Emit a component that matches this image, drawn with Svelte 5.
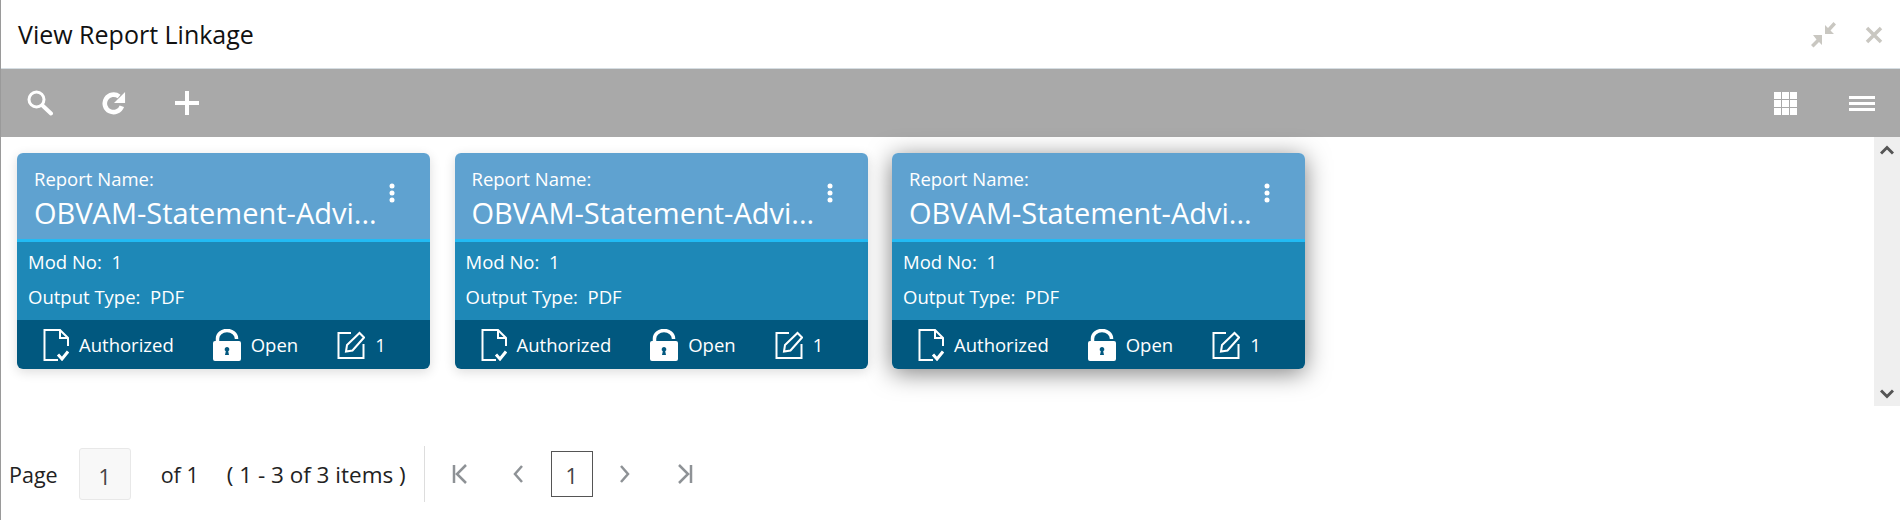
<script>
  const cards = [
    { id: 1, hover: false },
    { id: 2, hover: false },
    { id: 3, hover: true }
  ];
</script>

<div class="win">
  <header class="title">
    <h1>View Report Linkage</h1>
    <div class="winbtns">
      <svg width="27" height="27" viewBox="0 0 27 27" fill="#c9c7c1">
        <path d="M15 13V4L18 7 23.500 1 26 3.500 20.500 9.500 24 13Z"/>
        <path d="M12 14V24L9 21 3.500 26.500 1 24 6.500 18.500 3 14Z"/>
      </svg>
      <svg width="18" height="18" viewBox="0 0 18 18" stroke="#c9c7c1" stroke-width="3.500" fill="none">
        <path d="M2 2 16 16M16 2 2 16"/>
      </svg>
    </div>
  </header>

  <div class="toolbar">
    <div class="tools">
      <svg width="26" height="26" viewBox="0 0 26 26" fill="none" stroke="#fff">
        <circle cx="9.500" cy="9.500" r="7.500" stroke-width="3"/>
        <path d="M15.500 15.500 24 23.500" stroke-width="4" stroke-linecap="round"/>
      </svg>
      <svg width="24" height="24" viewBox="0 0 26 26" fill="none">
        <path d="M21.500 16.500A9.500 9.500 0 1 1 18.500 6" stroke="#fff" stroke-width="5"/>
        <path d="M25 1V13H13Z" fill="#fff"/>
      </svg>
      <svg width="24" height="24" viewBox="0 0 24 24" fill="#fff">
        <path d="M10 0h4v10h10v4H14v10h-4V14H0v-4h10z"/>
      </svg>
    </div>
    <div class="views">
      <svg width="23" height="23" viewBox="0 0 23 23" fill="#fff">
        {#each [0, 8, 16] as y}
          {#each [0, 8, 16] as x}
            <rect x={x} y={y} width="7" height="7"/>
          {/each}
        {/each}
      </svg>
      <svg width="26" height="15" viewBox="0 0 26 15" fill="#fff">
        <rect y="0" width="26" height="3"/>
        <rect y="6" width="26" height="3"/>
        <rect y="12" width="26" height="3"/>
      </svg>
    </div>
  </div>

  <div class="body">
    <div class="grid">
      {#each cards as c (c.id)}
        <article class="card" class:hover={c.hover}>
          <div class="head">
            <div class="names">
              <div class="lbl">Report Name:</div>
              <div class="val">OBVAM-Statement-Advi...</div>
            </div>
            <svg class="kebab" width="6" height="20" viewBox="0 0 6 20" fill="#fff">
              <circle cx="3" cy="3" r="2.500"/>
              <circle cx="3" cy="10" r="2.500"/>
              <circle cx="3" cy="17" r="2.500"/>
            </svg>
          </div>
          <div class="mid">
            <div>Mod No:&nbsp; 1</div>
            <div>Output Type:&nbsp; PDF</div>
          </div>
          <div class="foot">
            <span class="st first">
              <svg width="26" height="32" viewBox="0 0 26 32" fill="none" stroke="#fff" stroke-width="2">
                <path d="M15 31H1.500V1H17L25 9V17M17 1V9H25"/>
                <path d="M15 25.500 19 30 25 22.500" stroke-width="3"/>
              </svg>
              Authorized
            </span>
            <span class="st second">
              <svg width="28" height="32" viewBox="0 0 28 32" fill="#fff">
                <path d="M4.500 13V9.500A9.500 8 0 0 1 23.500 9.500V10" fill="none" stroke="#fff" stroke-width="3.500"/>
                <path fill-rule="evenodd" d="M2 12H26a2 2 0 0 1 2 2V30a2 2 0 0 1-2 2H2a2 2 0 0 1-2-2V14a2 2 0 0 1 2-2ZM14 18a2.300 2.300 0 0 0-1.200 4.300L12 26h4l-.8-3.700A2.300 2.300 0 0 0 14 18Z"/>
              </svg>
              Open
            </span>
            <span class="st third">
              <svg width="28" height="28" viewBox="0 0 28 28" fill="none" stroke="#fff" stroke-width="2">
                <path d="M14 2H1.500V27H26.500V13"/>
                <path d="M9 20.500 10 14 22.500 2 27 6.500 15.500 19.500Z"/>
              </svg>
              1
            </span>
          </div>
        </article>
      {/each}
    </div>
    <div class="scroll">
      <span class="sbtn">
        <svg width="14" height="10" viewBox="0 0 14 10" fill="none" stroke="#555" stroke-width="3"><path d="M1 8.500 7 2.500 13 8.500"/></svg>
      </span>
      <span class="sbtn">
        <svg width="14" height="10" viewBox="0 0 14 10" fill="none" stroke="#555" stroke-width="3"><path d="M1 1.500 7 7.500 13 1.500"/></svg>
      </span>
    </div>
  </div>

  <footer class="pager">
    <span>Page</span>
    <span class="pagebox">1</span>
    <span class="of">of 1</span>
    <span class="items">( 1 - 3 of 3 items )</span>
    <span class="sep"></span>
    <svg class="nav n1" width="15" height="20" viewBox="0 0 15 20" fill="none" stroke="#8e9296" stroke-width="2.500"><path d="M2 1V19M14 1 5 10 14 19"/></svg>
    <svg class="nav n2" width="12" height="20" viewBox="0 0 12 20" fill="none" stroke="#8e9296" stroke-width="2.500"><path d="M10 2 3 10 10 18"/></svg>
    <span class="cur">1</span>
    <svg class="nav n3" width="12" height="20" viewBox="0 0 12 20" fill="none" stroke="#8e9296" stroke-width="2.500"><path d="M2 2 9 10 2 18"/></svg>
    <svg class="nav n4" width="15" height="20" viewBox="0 0 15 20" fill="none" stroke="#8e9296" stroke-width="2.500"><path d="M13 1V19M1 1 10 10 1 19"/></svg>
  </footer>
</div>

<style>
  :global(body) { margin: 0; background: #fff; font-family: "Open Sans", "Noto Sans", sans-serif; }
  .win { height: 520px; border-left: 1px solid #9a9a9a; box-sizing: border-box; display: flex; flex-direction: column; overflow: hidden; }

  .title { height: 68px; flex: none; display: flex; align-items: center; justify-content: space-between; border-bottom: 1px solid #d5dde2; padding: 0 17px 0 17px; }
  h1 { margin: 0; font-size: 25px; font-weight: 400; color: #111; }
  .winbtns { display: flex; align-items: center; gap: 28px; margin-top: 1px; }

  .toolbar { height: 68px; flex: none; background: #a9a9a9; display: flex; align-items: center; justify-content: space-between; padding: 0 25px 0 26px; box-sizing: border-box; }
  .tools { display: flex; align-items: center; gap: 49px; }
  .views { display: flex; align-items: center; gap: 52px; }

  .body { height: 269px; flex: none; display: flex; justify-content: space-between; }
  .grid { display: flex; gap: 24.500px; padding: 16px; align-items: flex-start; }
  .card { width: 413px; height: 216px; border-radius: 6px; overflow: hidden; color: #fff; display: flex; flex-direction: column; box-shadow: 0 3px 12px rgba(0,0,0,.14); }
  .card.hover { box-shadow: 0 4px 24px rgba(0,0,0,.5); }

  .head { height: 86px; flex: none; background: #5fa2d0; border-bottom: 3px solid #22bbf4; display: flex; padding: 0 35px 0 17px; justify-content: space-between; }
  .names { width: 343px; }
  .lbl { font-size: 18.500px; margin-top: 13px; line-height: 25px; }
  .val { font-size: 29px; line-height: 38px; margin-top: 3px; white-space: nowrap; }
  .kebab { margin-top: 30px; flex: none; }

  .mid { flex: 1; background: #1e88b7; padding: 7px 11px 0; font-size: 18.500px; line-height: 25px; display: flex; flex-direction: column; gap: 10px; }

  .foot { height: 49px; flex: none; background: #01587f; display: flex; align-items: center; font-size: 18.500px; }
  .st { display: flex; align-items: center; gap: 10px; }
  .first { margin-left: 26px; }
  .second { margin-left: 39px; }
  .third { margin-left: 39px; }

  .scroll { width: 26px; background: #efefef; display: flex; flex-direction: column; justify-content: space-between; }
  .sbtn { height: 25px; display: flex; align-items: center; justify-content: center; }

  .pager { flex: 1; display: flex; align-items: center; font-size: 21.500px; color: #222; padding: 22px 0 0 8px; }
  .pagebox { width: 52px; height: 52px; margin-left: 21px; box-sizing: border-box; background: #f8f8f8; border: 1px solid #e8e8e8; border-radius: 3px; display: flex; align-items: center; justify-content: center; color: #444; padding-top: 4px; }
  .of { margin-left: 30px; }
  .items { margin-left: 28px; font-size: 22.500px; }
  .sep { width: 1px; height: 56px; background: #ddd; margin-left: 18px; }
  .nav { flex: none; }
  .n1 { margin-left: 27px; }
  .n2 { margin-left: 45px; }
  .cur { width: 42px; height: 46px; box-sizing: border-box; border: 1px solid #555; margin-left: 27px; display: flex; align-items: center; justify-content: center; color: #444; padding-top: 3px; }
  .n3 { margin-left: 26px; }
  .n4 { margin-left: 47px; }
</style>
